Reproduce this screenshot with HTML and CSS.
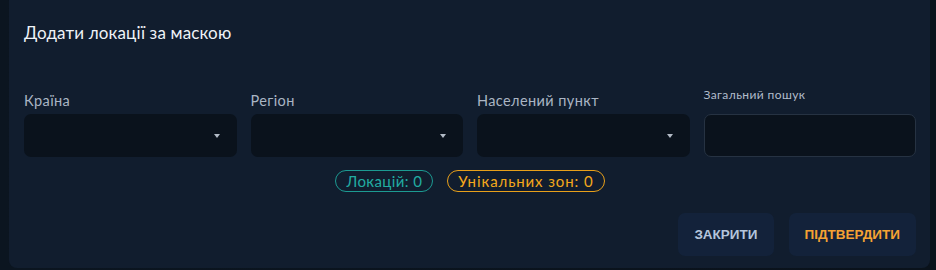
FILE: index.html
```html
<!DOCTYPE html>
<html lang="uk">
<head>
<meta charset="utf-8">
<title>Додати локації за маскою</title>
<link rel="stylesheet" href="styles.css">
</head>
<body>
<div class="page">
  <div class="dialog">
    <h2 class="title">Додати локації за маскою</h2>
    <div class="fields">
      <div class="field">
        <label class="label">Країна</label>
        <div class="select"><span class="caret"></span></div>
      </div>
      <div class="field">
        <label class="label">Регіон</label>
        <div class="select"><span class="caret"></span></div>
      </div>
      <div class="field">
        <label class="label">Населений пункт</label>
        <div class="select"><span class="caret"></span></div>
      </div>
      <div class="field">
        <label class="label label-small">Загальний пошук</label>
        <div class="input"></div>
      </div>
    </div>
    <div class="chips">
      <span class="chip chip-teal">Локацій: 0</span>
      <span class="chip chip-orange">Унікальних зон: 0</span>
    </div>
    <div class="actions">
      <button class="btn btn-close">ЗАКРИТИ</button>
      <button class="btn btn-confirm">ПІДТВЕРДИТИ</button>
    </div>
  </div>
</div>
</body>
</html>
```
FILE: styles.css
```css
html, body {
  margin: 0;
  padding: 0;
  height: 100%;
  overflow: hidden;
}
body {
  background: linear-gradient(90deg, #0b1520 0%, #0a121b 100%);
  font-family: "Lato", "Noto Sans", sans-serif;
}
.page {
  padding: 0 6px 0 9px;
}
.dialog {
  margin-top: -8px;
  background: #111d2e;
  border-radius: 8px;
  padding: 30px 14px 10px 15px;
  height: 236px;
}
.title {
  margin: 0;
  font-size: 17px;
  font-weight: 400;
  color: #eef2f7;
  line-height: 22px;
  letter-spacing: 0.15px;
}
.fields {
  margin-top: 48px;
  display: grid;
  grid-template-columns: repeat(4, 1fr);
  column-gap: 14px;
}
.field {
  display: flex;
  flex-direction: column;
}
.label {
  font-size: 14.5px;
  color: #aab5c4;
  line-height: 18px;
  height: 18px;
  margin-bottom: 4px;
  letter-spacing: 0.4px;
}
.label-small {
  font-size: 12px;
  line-height: 14px;
  height: 14px;
  margin-top: -4px;
  margin-bottom: 12px;
  color: #b2bccb;
  letter-spacing: 0.4px;
}
.select {
  height: 43px;
  background: #0a121c;
  border-radius: 7px;
  display: flex;
  align-items: center;
  justify-content: flex-end;
  padding-right: 17px;
}
.caret {
  width: 0;
  height: 0;
  border-left: 3.5px solid transparent;
  border-right: 3.5px solid transparent;
  border-top: 4px solid #b3bbc6;
}
.input {
  height: 41px;
  background: #0a121c;
  border: 1px solid #263242;
  border-radius: 7px;
}
.chips {
  margin-top: 13px;
  display: flex;
  justify-content: center;
  gap: 14px;
}
.chip {
  font-size: 15px;
  line-height: 20px;
  padding: 0 10px;
  border-radius: 12px;
  border: 1px solid;
  letter-spacing: 0.4px;
}
.chip-teal {
  color: #22aca2;
  border-color: #1c9a92;
}
.chip-orange {
  color: #f4a81c;
  border-color: #e8a01a;
  letter-spacing: 0.9px;
}
.actions {
  margin-top: 21px;
  display: flex;
  justify-content: flex-end;
  gap: 15px;
}
.btn {
  height: 43px;
  padding: 0 16px;
  border: none;
  border-radius: 7px;
  background: #13223a;
  font-family: "Liberation Sans", Arial, sans-serif;
  font-weight: 700;
  font-size: 13.5px;
  letter-spacing: 0;
}
.btn-close {
  color: #b4c5dc;
}
.btn-confirm {
  color: #f6a233;
}
```
